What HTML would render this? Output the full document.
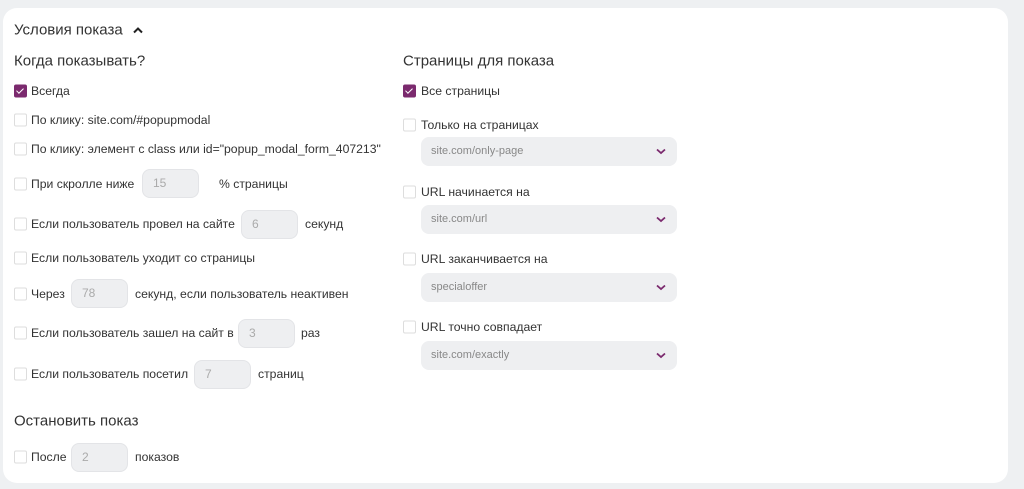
<!DOCTYPE html><html><head><meta charset="utf-8"><style>
body{margin:0;width:1024px;height:489px;background:#eef0f2;font-family:"Liberation Sans",sans-serif;position:relative;overflow:hidden}
.card{position:absolute;left:3px;top:8px;width:1005px;height:475px;background:#fff;border-radius:14px}
.a{position:absolute;white-space:nowrap}
.t{font-size:12.2px;color:#333;transform:translateY(-50%)}
.h{font-size:15px;color:#333;transform:translateY(-50%)}
.cb{position:absolute;width:11px;height:11px;border:1px solid #ddd;border-radius:2px;background:#fff;transform:translateY(-50%)}
.cb.on{background:#7b2a6e;border-color:#7b2a6e}
.cb.on:after{content:"";position:absolute;left:3px;top:1px;width:3px;height:6px;border:solid #fff;border-width:0 1.5px 1.5px 0;transform:rotate(45deg)}
.in{position:absolute;height:29px;width:57px;background:#eeeff1;border:1px solid #e3e4e7;border-radius:8px;box-sizing:border-box;font-size:12px;color:#aaa;line-height:27px;padding-left:10px}
.sel{position:absolute;left:421px;width:256px;height:29px;background:#eeeff1;border-radius:8px;font-size:11px;color:#888;line-height:29px;padding-left:10px;box-sizing:border-box}
.sel svg{position:absolute;right:11px;top:11px}
</style></head><body><div class="card"></div>
<div class="a h" style="left:14px;top:30px">Условия показа <svg width="10" height="8" viewBox="0 0 10 8" style="margin-left:6px"><path d="M1 6L5 2L9 6" stroke="#222" stroke-width="2" fill="none"/></svg></div>
<div class="a h" style="left:14px;top:61px">Когда показывать?</div>
<div class="cb on" style="left:14px;top:91px"></div><div class="a t" style="left:31px;top:91px">Всегда</div>
<div class="cb" style="left:14px;top:120px"></div><div class="a t" style="left:31px;top:120px">По клику: site.com/#popupmodal</div>
<div class="cb" style="left:14px;top:149px"></div><div class="a t" style="left:31px;top:149px">По клику: элемент с class или id="popup_modal_form_407213"</div>
<div class="cb" style="left:14px;top:184px"></div><div class="a t" style="left:31px;top:184px">При скролле ниже</div><div class="in" style="left:142px;top:169px">15</div><div class="a t" style="left:219px;top:184px">% страницы</div>
<div class="cb" style="left:14px;top:224px"></div><div class="a t" style="left:31px;top:224px">Если пользователь провел на сайте</div><div class="in" style="left:241px;top:210px">6</div><div class="a t" style="left:305px;top:224px">секунд</div>
<div class="cb" style="left:14px;top:258px"></div><div class="a t" style="left:31px;top:258px">Если пользователь уходит со страницы</div>
<div class="cb" style="left:14px;top:294px"></div><div class="a t" style="left:31px;top:294px">Через</div><div class="in" style="left:71px;top:279px">78</div><div class="a t" style="left:135px;top:294px">секунд, если пользователь неактивен</div>
<div class="cb" style="left:14px;top:333px"></div><div class="a t" style="left:31px;top:333px">Если пользователь зашел на сайт в</div><div class="in" style="left:238px;top:319px">3</div><div class="a t" style="left:301px;top:333px">раз</div>
<div class="cb" style="left:14px;top:374px"></div><div class="a t" style="left:31px;top:374px">Если пользователь посетил</div><div class="in" style="left:194px;top:360px">7</div><div class="a t" style="left:258px;top:374px">страниц</div>
<div class="a h" style="left:14px;top:421px">Остановить показ</div>
<div class="cb" style="left:14px;top:457px"></div><div class="a t" style="left:31px;top:457px">После</div><div class="in" style="left:71px;top:443px">2</div><div class="a t" style="left:135px;top:457px">показов</div>
<div class="a h" style="left:403px;top:61px">Страницы для показа</div>
<div class="cb on" style="left:403px;top:91px"></div><div class="a t" style="left:421px;top:91px">Все страницы</div>
<div class="cb" style="left:403px;top:125px"></div><div class="a t" style="left:421px;top:125px">Только на страницах</div>
<div class="sel" style="top:137px">site.com/only-page<svg width="10" height="7" viewBox="0 0 10 7"><path d="M1 1.5L5 5L9 1.5" stroke="#7b2a6e" stroke-width="1.8" fill="none"/></svg></div>
<div class="cb" style="left:403px;top:192px"></div><div class="a t" style="left:421px;top:192px">URL начинается на</div>
<div class="sel" style="top:205px">site.com/url<svg width="10" height="7" viewBox="0 0 10 7"><path d="M1 1.5L5 5L9 1.5" stroke="#7b2a6e" stroke-width="1.8" fill="none"/></svg></div>
<div class="cb" style="left:403px;top:259px"></div><div class="a t" style="left:421px;top:259px">URL заканчивается на</div>
<div class="sel" style="top:273px">specialoffer<svg width="10" height="7" viewBox="0 0 10 7"><path d="M1 1.5L5 5L9 1.5" stroke="#7b2a6e" stroke-width="1.8" fill="none"/></svg></div>
<div class="cb" style="left:403px;top:327px"></div><div class="a t" style="left:421px;top:327px">URL точно совпадает</div>
<div class="sel" style="top:341px">site.com/exactly<svg width="10" height="7" viewBox="0 0 10 7"><path d="M1 1.5L5 5L9 1.5" stroke="#7b2a6e" stroke-width="1.8" fill="none"/></svg></div>
</body></html>
